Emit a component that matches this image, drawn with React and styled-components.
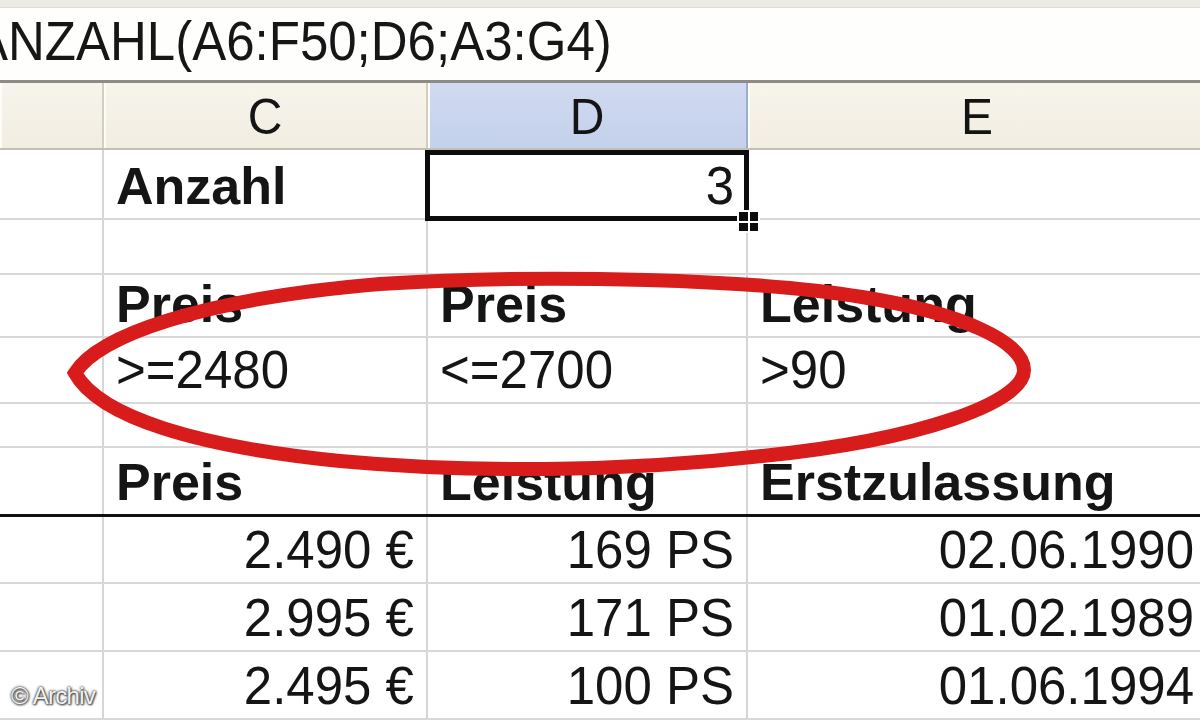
import React from 'react';
import styled, { createGlobalStyle } from 'styled-components';

const GlobalStyle = createGlobalStyle`
  html, body {
    margin: 0;
    padding: 0;
    background: #fff;
    overflow: hidden;
  }
  body {
    font-family: 'Liberation Sans', Arial, sans-serif;
    color: #111;
  }
`;

const COLS = '104px 324px 320px 460px';

const Screen = styled.div`
  position: relative;
  width: 1200px;
  height: 720px;
  overflow: hidden;
  background: #fff;
`;

const TopStrip = styled.div`
  height: 8px;
  background: #edece4;
  border-bottom: 1px solid #e0ded4;
  box-sizing: border-box;
`;

const FormulaBar = styled.div`
  height: 75px;
  display: flex;
  align-items: flex-end;
  padding-bottom: 12px;
  box-sizing: border-box;
  background: #fefefc;
  border-bottom: 3px solid #8c8b86;
  font-size: 51px;
  line-height: 1;
  color: #161616;
`;

const Formula = styled.span`
  display: inline-block;
  margin-left: -26px;
  white-space: nowrap;
  transform: scaleY(1.08);
  transform-origin: 50% 85%;
`;

const Sheet = styled.div`
  width: 1208px;
`;

const HeaderRow = styled.div`
  display: grid;
  grid-template-columns: ${COLS};
  height: 67px;
  box-sizing: border-box;
  border-bottom: 2px solid #c3c0b1;
`;

const HeaderCell = styled.div`
  display: flex;
  align-items: flex-end;
  justify-content: center;
  padding-bottom: 6px;
  box-sizing: border-box;
  font-size: 48px;
  line-height: 1;
  color: #141414;
  background: ${(p) =>
    p.$active
      ? 'linear-gradient(#d0daf0, #c4d1ec)'
      : 'linear-gradient(#f7f4ec, #f1ede2)'};
  border-right: 2px solid ${(p) => (p.$active ? '#9aaed3' : '#d3cfc0')};
  box-shadow: inset 2px 0 0 #fdfcf8;
`;

const Row = styled.div`
  display: grid;
  grid-template-columns: ${COLS};
  height: ${(p) => p.$h}px;
  box-sizing: border-box;
  border-bottom: ${(p) => (p.$thick ? '3px solid #111' : '2px solid #d8d8d8')};
`;

const Cell = styled.div`
  position: relative;
  display: flex;
  align-items: flex-end;
  justify-content: ${(p) => (p.$right ? 'flex-end' : 'flex-start')};
  padding: 0 ${(p) => (p.$right ? '12px' : '6px')} 6px 12px;
  box-sizing: border-box;
  border-right: 2px solid #d6d6d6;
  font-size: ${(p) => (p.$bold ? '52px' : '51px')};
  font-weight: ${(p) => (p.$bold ? 700 : 400)};
  line-height: 1;
  color: #151515;

  ${(p) =>
    p.$selected &&
    `
    &::after {
      content: '';
      position: absolute;
      left: -3px;
      top: 0;
      right: -3px;
      bottom: -3px;
      border: 5px solid #0c0c0c;
      z-index: 2;
    }
    &::before {
      content: '';
      position: absolute;
      right: -12px;
      bottom: -13px;
      width: 19px;
      height: 19px;
      background:
        linear-gradient(#fff, #fff) center / 100% 2px no-repeat,
        linear-gradient(#fff, #fff) center / 2px 100% no-repeat,
        #0c0c0c;
      box-shadow: 0 0 0 2px #fff;
      z-index: 3;
    }
  `}
`;

const Txt = styled.span`
  display: inline-block;
  white-space: nowrap;
  transform: scaleY(${(p) => (p.$bold ? 1 : 1.06)});
  transform-origin: 50% 85%;
`;

const Ring = styled.svg`
  position: absolute;
  left: 0;
  top: 0;
  width: 1200px;
  height: 720px;
  pointer-events: none;
  z-index: 4;
`;

const Watermark = styled.div`
  position: absolute;
  left: 11px;
  bottom: 10px;
  font-size: 24px;
  letter-spacing: -0.7px;
  color: #f2f2f2;
  text-shadow: 0 0 2px #333, 0 0 3px #555, 1px 1px 2px #444;
  z-index: 5;
`;

const header = [
  { t: '' },
  { t: 'C' },
  { t: 'D', active: true },
  { t: 'E' },
];

const rows = [
  { h: 70, cells: [null, { t: 'Anzahl', bold: true }, { t: '3', right: true, selected: true }, null] },
  { h: 55, cells: [] },
  { h: 63, cells: [null, { t: 'Preis', bold: true }, { t: 'Preis', bold: true }, { t: 'Leistung', bold: true }] },
  { h: 66, cells: [null, { t: '>=2480' }, { t: '<=2700' }, { t: '>90' }] },
  { h: 44, cells: [] },
  { h: 69, thick: true, cells: [null, { t: 'Preis', bold: true }, { t: 'Leistung', bold: true }, { t: 'Erstzulassung', bold: true }] },
  { h: 67, cells: [null, { t: '2.490 €', right: true }, { t: '169 PS', right: true }, { t: '02.06.1990', right: true }] },
  { h: 68, cells: [null, { t: '2.995 €', right: true }, { t: '171 PS', right: true }, { t: '01.02.1989', right: true }] },
  { h: 68, cells: [null, { t: '2.495 €', right: true }, { t: '100 PS', right: true }, { t: '01.06.1994', right: true }] },
];

const App = () => {
  return (
    <Screen>
      <GlobalStyle />
      <TopStrip />
      <FormulaBar>
        <Formula>ANZAHL(A6:F50;D6;A3:G4)</Formula>
      </FormulaBar>
      <Sheet>
        <HeaderRow>
          {header.map((h, i) => (
            <HeaderCell key={i} $active={h.active}>
              <Txt>{h.t}</Txt>
            </HeaderCell>
          ))}
        </HeaderRow>
        {rows.map((row, r) => (
          <Row key={r} $h={row.h} $thick={row.thick}>
            {[0, 1, 2, 3].map((c) => {
              const cell = row.cells[c];
              return (
                <Cell
                  key={c}
                  $bold={cell && cell.bold}
                  $right={cell && cell.right}
                  $selected={cell && cell.selected}
                >
                  {cell && <Txt $bold={cell.bold}>{cell.t}</Txt>}
                </Cell>
              );
            })}
          </Row>
        ))}
      </Sheet>

      <Ring viewBox="0 0 1200 720">
        <path
          d="M 75 373
             C 98 336, 200 299, 380 284
             C 550 273, 760 280, 862 297
             C 962 313, 1024 342, 1024 370
             C 1024 402, 922 440, 762 456
             C 620 472, 470 473, 340 461
             C 200 447, 100 418, 75 373 Z"
          fill="none"
          stroke="#d81c1c"
          strokeWidth="14"
          strokeLinejoin="miter"
        />
      </Ring>

      <Watermark>© Archiv</Watermark>
    </Screen>
  );
};

export default App;
